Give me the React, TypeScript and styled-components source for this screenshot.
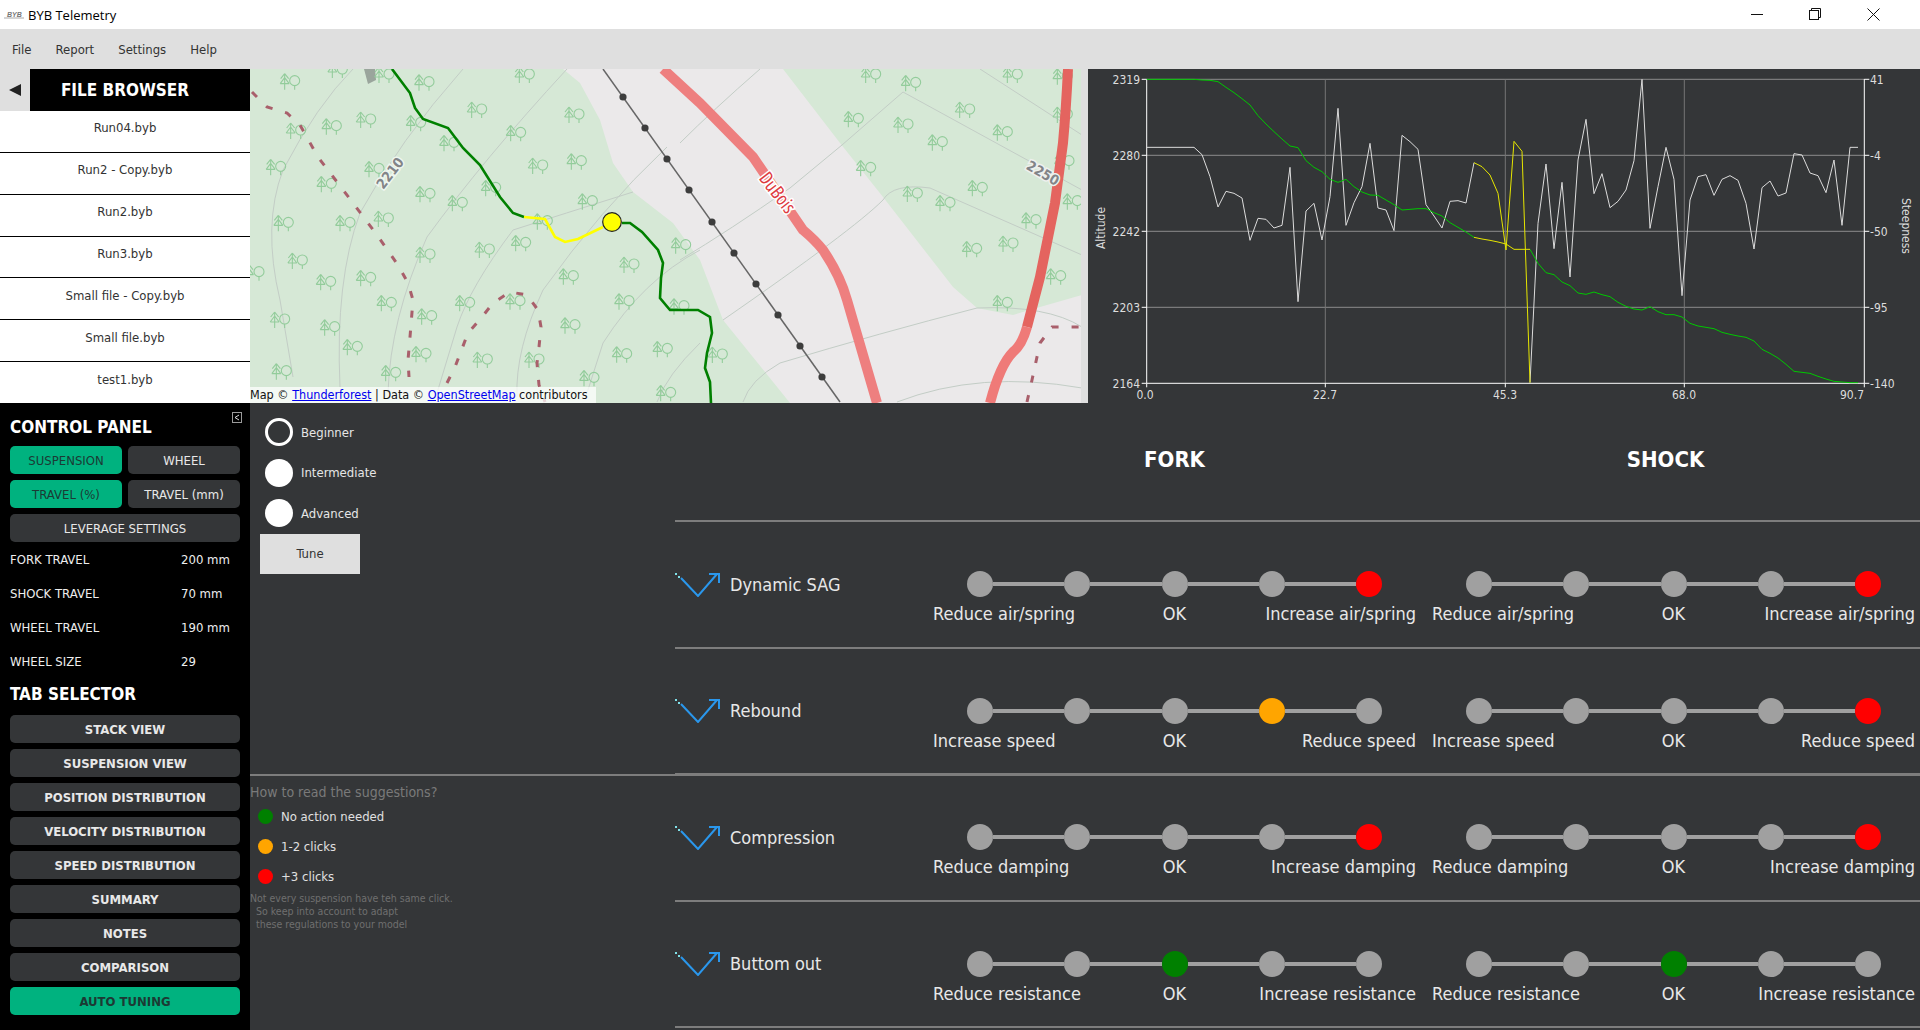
import React from "react";
import styled, { createGlobalStyle } from "styled-components";

const BG = "#343638";
const UI = `"DejaVu Sans", "Liberation Sans", sans-serif`;

const Global = createGlobalStyle`
  html, body { margin: 0; padding: 0; width: 1920px; height: 1030px; overflow: hidden; background: ${BG}; }
  * { box-sizing: border-box; }
`;

const Page = styled.div`
  width: 1920px; height: 1030px; display: flex; flex-direction: column;
  font-family: ${UI}; font-stretch: condensed;
`;
const TitleBar = styled.div`
  height: 29px; background: #fff; display: flex; align-items: center; padding-left: 4px;
`;
const Title = styled.span`
  font-family: "Open Sans", "Noto Sans", sans-serif; font-stretch: normal; font-size: 13px; color: #000; margin-left: 4px;
`;
const WindowButtons = styled.div`
  margin-left: auto; display: flex; width: 177px; padding-left: 8px; gap: 46px;
`;
const MenuBar = styled.div`
  height: 40px; background: #dfdfdf; display: flex; align-items: center; padding-left: 12px; gap: 24px;
  font-size: 13px; color: #333;
`;
const TopArea = styled.div`
  height: 334px; display: flex;
`;
const FileBrowser = styled.div`
  width: 250px; background: #fff; display: flex; flex-direction: column;
`;
const FileHeader = styled.div`
  height: 42px; display: flex; background: #dfdfdf; flex: none;
`;
const Collapse = styled.div`
  width: 30px; display: flex; align-items: center; justify-content: center;
`;
const Triangle = styled.div`
  width: 0; height: 0; border-style: solid; border-width: 6.5px 12px 6.5px 0; border-color: transparent #222 transparent transparent;
`;
const FileTitle = styled.div`
  flex: 1; background: #000; color: #fff; font-weight: 700; font-size: 17px; display: flex; align-items: center; justify-content: center; padding-right: 30px;
`;
const FileRow = styled.div<{ $last?: boolean }>`
  flex: 1; display: flex; align-items: center; justify-content: center; font-size: 13px; color: #333; padding-bottom: 7px;
  border-bottom: ${p => (p.$last ? "none" : "1px solid #000")};
`;
const MapPane = styled.div`
  width: 838px; background: #dfdfdf; position: relative; overflow: hidden;
`;
const MapSvg = styled.svg`
  display: block; width: 831px; height: 334px;
`;
const Attribution = styled.div`
  position: absolute; left: 0; bottom: 0; height: 16px; width: 346px; background: rgba(255,255,255,.72);
  font-size: 12.5px; color: #111; line-height: 16px; white-space: nowrap;
`;
const MapLink = styled.a`
  color: #0000ee; text-decoration: underline;
`;
const ChartPane = styled.div`
  width: 832px; background: ${BG};
`;
const ChartSvg = styled.svg`
  display: block; width: 832px; height: 334px;
  text { font-family: ${UI}; font-stretch: condensed; font-size: 12px; fill: #ddd; }
`;
const Lower = styled.div`
  flex: 1; display: flex; min-height: 0;
`;
const Sidebar = styled.div`
  width: 250px; background: #000; padding: 13px 10px 0; display: flex; flex-direction: column; position: relative;
`;
const SideHeading = styled.div`
  font-size: 17px; font-weight: 700; color: #fff; line-height: 22px;
`;
const ToggleIcon = styled.svg`
  position: absolute; right: 8px; top: 9px; width: 10px; height: 11px;
`;
const ButtonGrid = styled.div`
  display: grid; grid-template-columns: 112px 112px; gap: 6px; margin-top: 8px;
`;
const PanelButton = styled.div<{ $on?: boolean; $wide?: boolean; $bold?: boolean }>`
  height: 28px; border-radius: 5px; display: flex; align-items: center; justify-content: center;
  background: ${p => (p.$on ? "#00b27f" : BG)}; color: ${p => (p.$on ? "#1c3a34" : "#e8e8e8")};
  font-size: 13px; font-weight: ${p => (p.$bold ? 700 : 400)};
  ${p => (p.$wide ? "grid-column: 1 / 3;" : "")}
`;
const InfoList = styled.div`
  display: flex; flex-direction: column; margin-top: 0;
`;
const InfoRow = styled.div`
  height: 34px; display: flex; align-items: center; color: #eee; font-size: 13px;
`;
const InfoLabel = styled.span`
  width: 171px;
`;
const TabHeading = styled(SideHeading)`
  margin-top: 5px;
`;
const TabList = styled.div`
  display: flex; flex-direction: column; gap: 6px; margin-top: 10px;
`;
const Main = styled.div`
  flex: 1; display: flex; background: ${BG};
`;
const LeftCol = styled.div`
  width: 425px; display: flex; flex-direction: column; position: relative; z-index: 1;
`;
const TopPane = styled.div`
  height: 373px; margin-right: -1245px; border-bottom: 2px solid #7d7d7d; padding: 15px 0 0 15px;
`;
const RadioRow = styled.div`
  display: flex; align-items: center; height: 28px; margin-bottom: 12.5px; gap: 8px; color: #e6e6e6; font-size: 13px;
`;
const Radio = styled.div<{ $on?: boolean }>`
  width: 28px; height: 28px; border-radius: 50%;
  background: ${p => (p.$on ? BG : "#fff")}; border: ${p => (p.$on ? "3px solid #fff" : "none")};
`;
const TuneButton = styled.div`
  width: 100px; height: 40px; margin: -6px 0 0 -5px; background: #dfdfdf; color: #333; font-size: 13px;
  display: flex; align-items: center; justify-content: center;
`;
const Legend = styled.div`
  padding-top: 7px; display: flex; flex-direction: column;
`;
const LegendTitle = styled.div`
  font-size: 14px; line-height: 18px; color: #7a7a7a;
`;
const LegendRow = styled.div`
  height: 30px; display: flex; align-items: center; gap: 8px; padding-left: 8px; color: #e0e0e0; font-size: 13px;
`;
const LegendDot = styled.div<{ $c: string }>`
  width: 15px; height: 15px; border-radius: 50%; background: ${p => p.$c};
`;
const LegendNote = styled.div`
  font-size: 10.5px; line-height: 13px; color: #6f6f6f; white-space: pre; margin-top: 1px;
`;
const RightCol = styled.div`
  flex: 1; display: flex; flex-direction: column;
`;
const HeaderRow = styled.div`
  height: 119px; border-bottom: 2px solid #7d7d7d; display: grid; grid-template-columns: 258px 483px 483px; column-gap: 16px; column-gap: 0;
  align-items: start; padding-top: 44px;
`;
const SideTitle = styled.div<{ $col: number }>`
  grid-column: ${p => p.$col}; font-size: 22px; font-weight: 700; color: #fff; text-align: center; line-height: 26px;
  ${p => (p.$col === 3 ? "margin-left: 16px;" : "")}
`;
const SuggestionRow = styled.div`
  height: 126.6px; border-bottom: 2px solid #7d7d7d; display: flex;
`;
const RowLabel = styled.div`
  width: 258px; height: 26px; margin-top: 49px; display: flex; align-items: center; gap: 9px; font-size: 18px; color: #e8e8e8;
`;
const Group = styled.div`
  width: 483px; margin-right: 16px; padding-top: 49px; display: flex; flex-direction: column; align-items: center;
`;
const Slider = styled.div`
  width: 415px; display: flex; align-items: center;
`;
const SliderDot = styled.div<{ $c?: string }>`
  width: 26px; height: 26px; border-radius: 50%; flex: none; background: ${p => p.$c || "#a0a0a0"};
`;
const Connector = styled.div`
  flex: 1; height: 4px; background: #a0a0a0;
`;
const Labels = styled.div`
  width: 100%; margin-top: 5px; display: grid; grid-template-columns: 1fr auto 1fr; font-size: 18px; line-height: 24px; color: #e8e8e8;
`;
const LabelEnd = styled.span`
  text-align: right;
`;

const z4 = (x: number, y: number) => [250 + x / 3, 60 + y / 3];
const z5 = (x: number, y: number) => [680 + x / 3, 60 + y / 3];
const trees = [
  ...[[122,65],[350,180],[247,200],[500,190],[600,250],[683,150],[800,220],[975,165],[866,318],[982,305],[1015,425],[80,322],[140,213],[232,373],[375,328],[528,403],[625,430],[725,385],[403,477],[288,490],[103,490],[880,485],[815,550],[706,570],[528,585],[145,603],[15,638],[230,667],[350,655],[958,650],[1140,615],[1295,557],[1125,725],[1290,740],[412,730],[533,770],[647,730],[798,725],[92,780],[242,803],[963,797],[310,862],[1118,884],[1240,868],[516,883],[700,900],[855,900],[97,935],[425,940],[1020,955],[1250,1000],[826,45],[525,68],[405,45],[265,30]].map(p => z4(p[0], p[1])),
  ...[[575,45],[695,70],[1000,45],[1150,50],[523,178],[672,195],[857,150],[970,218],[775,248],[1150,165],[1155,305],[560,325],[700,402],[798,430],[895,385],[1056,482],[878,568],[987,552],[1180,425],[1130,650],[970,730],[115,885]].map(p => z5(p[0], p[1])),
];
const contours = [
  "M353 69Q317 105 283 170Q262 225 280 300L293 377",
  "M463 69Q400 140 360 213Q335 280 340 387",
  "M567 69Q483 160 427 237Q390 320 388 393",
  "M633 192Q560 215 513 230Q470 287 457 327L437 393",
  "M667 147Q600 210 543 290Q515 350 517 397",
  "M700 250Q643 280 603 343L587 393",
  "M700 343Q667 375 657 402",
  "M760 69Q713 110 680 143",
  "M903 92L842 145L790 188Q730 230 680 260",
  "M903 92L1082 190",
  "M980 69L1082 135",
  "M1082 255L930 188Q893 183 883 200Q853 230 723 320",
  "M1082 327Q1047 305 977 308Q880 333 780 363Q750 380 743 402",
  "M1082 388Q980 370 897 402",
];
const dots = [[623,97],[645,128],[667,159],[689,190],[712,222],[734,253],[756,284],[778,315],[800,346],[822,377]];

function MapDrawing() {
  return (
    <MapSvg viewBox="250 69 831 334">
      <rect x="250" y="69" width="831" height="334" fill="#d6e8d6" />
      <path d="M563 69L783 69L840 143L883 197L953 287L977 308L1013 315L1040 307L1082 295V403H790L723 320L700 260L673 223L633 192L613 163L600 120L580 83Z" fill="#ebe9ea" />
      <path d="M364 69H375L376 80L368 84Z" fill="#9aa59c" />
      {contours.map((d, i) => <path key={i} d={d} fill="none" stroke="#c3cdc6" strokeWidth="1" />)}
      {trees.map(([x, y], i) => (
        <g key={i} transform={`translate(${x} ${y})`} fill="none" stroke="#93cc9b" strokeWidth="1.1">
          <path d="M-6 8V-8M-6-8L-10-3M-6-8L-2-3M-6-4L-10.5 2M-6-4L-1.5 2M-10.5 2H-1.5" />
          <circle cx="4" cy="-1" r="5" />
          <path d="M4 4V8" />
        </g>
      ))}
      <g fill="none" stroke="#a95f6b" strokeWidth="3" strokeDasharray="7 13">
        <path d="M252 92L267 107L287 113L300 125L318 157L353 203L377 235L398 265L408 283L413 300L410 337L408 360L409 377" />
        <path d="M447 383L455 367L468 333L482 317L493 303L510 292L527 295L538 310L541 327L539 347L537 363L539 385L545 402" />
        <path d="M1027 402L1032 380L1040 343L1052 327H1082" />
      </g>
      <path d="M603 69L840 402" stroke="#666" strokeWidth="1.5" fill="none" />
      {dots.map(([x, y], i) => <circle key={i} cx={x} cy={y} r="3.6" fill="#3d3d3d" />)}
      <path d="M663 69L700 103L753 157L803 230Q815 240 823 250Q840 275 847 300L877 403" stroke="#ee7f7f" strokeWidth="10" fill="none" />
      <path d="M1068 69Q1066 110 1063 143L1055 203L1040 277L1027 327" stroke="#e4645f" strokeWidth="10" fill="none" />
      <path d="M1027 327Q1022 345 1013 352Q1000 365 990 403" stroke="#ef7a78" strokeWidth="10" fill="none" />
      <text x="777" y="199" transform="rotate(52 777 193)" textAnchor="middle" fontFamily="Open Sans, sans-serif" fontSize="19" fill="#dd3a3f" stroke="#fff" strokeWidth="3" paintOrder="stroke">DuBois</text>
      <text x="390" y="178" transform="rotate(-52 390 173)" textAnchor="middle" fontFamily="DejaVu Sans, sans-serif" fontWeight="700" fontSize="14" fill="#828488" stroke="#eef5ee" strokeWidth="3" paintOrder="stroke">2210</text>
      <text x="1043" y="178" transform="rotate(30 1043 173)" textAnchor="middle" fontFamily="DejaVu Sans, sans-serif" fontWeight="700" fontSize="14" fill="#828488" stroke="#eef0ee" strokeWidth="3" paintOrder="stroke">2250</text>
      <path d="M392 69L410 93L415 108L423 119L448 128L463 148L480 165L500 197L513 213L524 217" stroke="#008000" strokeWidth="2.6" fill="none" />
      <path d="M524 217L545 219L555 237L565 242L578 239L603 227" stroke="#ffff00" strokeWidth="2.6" fill="none" />
      <path d="M622 223H630L642 232L658 250L663 263L661 278L660 298L670 310H698L710 317L712 333L707 353L705 368L710 382L711 403" stroke="#008000" strokeWidth="2.6" fill="none" />
      <circle cx="612" cy="222" r="9.3" fill="#ffff00" stroke="#222" strokeWidth="1.2" />
    </MapSvg>
  );
}

const whiteA = [[170,262],[312,262],[336,284],[360,350],[384,441],[408,394],[432,400],[456,414],[480,541],[504,475],[528,478],[552,504],[576,496],[600,322],[624,725],[648,453],[672,430],[696,540],[720,410],[744,145],[768,496],[792,428],[816,380],[840,250],[864,444],[888,450],[912,512],[936,226],[960,245],[984,268],[1008,434],[1032,468],[1056,504],[1080,424],[1104,422],[1128,429],[1152,308]];
const yellowA1 = [[1152,308],[1176,320],[1200,345],[1224,400],[1248,570]];
const yellowA2 = [[18,570],[42,244],[66,274],[90,968]];
const whiteB = [[90,968],[114,490],[138,312],[162,566],[186,367],[210,651],[234,300],[258,178],[282,401],[306,341],[330,443],[354,424],[378,390],[402,302],[426,58],[450,505],[474,380],[498,262],[522,358],[546,707],[570,420],[594,350],[618,344],[642,406],[666,358],[690,347],[714,361],[738,430],[762,567],[786,383],[810,363],[834,408],[858,399],[882,281],[906,285],[930,339],[954,347],[978,398],[1002,300],[1026,496],[1050,262],[1074,262]];
const greenA = [[170,58],[312,58],[336,60],[360,61],[384,65],[408,82],[432,98],[456,116],[480,135],[504,167],[528,192],[552,215],[576,237],[600,258],[624,263],[648,302],[672,322],[696,335],[720,358],[744,367],[768,358],[792,380],[816,396],[840,405],[864,406],[888,420],[912,434],[936,450],[960,448],[984,446],[1008,446],[1032,458],[1056,468],[1080,488],[1104,502],[1128,516],[1152,532]];
const gYellow1 = [[1152,532],[1176,537],[1200,541],[1224,546],[1248,552]];
const gYellow2 = [[18,552],[42,568],[66,568],[90,568]];
const greenB = [[90,568],[114,610],[138,638],[162,644],[186,666],[210,677],[234,699],[258,703],[282,696],[306,704],[330,710],[354,727],[378,739],[402,747],[426,750],[450,740],[474,755],[498,764],[522,764],[546,771],[570,790],[594,798],[618,802],[642,806],[666,817],[690,823],[714,828],[738,832],[762,843],[786,868],[810,880],[834,894],[858,913],[882,934],[906,937],[930,940],[954,949],[978,957],[1002,964],[1026,966],[1050,968],[1074,968]];
const p6 = (a: number[][]) => a.map(([x, y]) => `${1090 + x / 3},${60 + y / 3}`).join(" ");
const p7 = (a: number[][]) => a.map(([x, y]) => `${1500 + x / 3},${60 + y / 3}`).join(" ");

function Chart() {
  const ys = [79.3, 155.3, 231.3, 307.3];
  const xs = [1325.3, 1505.3, 1684.3];
  const L = 1146.7, R = 1864.3, B = 383.3;
  return (
    <ChartSvg viewBox="1088 69 832 334">
      {ys.map(y => <line key={y} x1={L} x2={R} y1={y} y2={y} stroke="#8c8c8c" />)}
      {xs.map(x => <line key={x} x1={x} x2={x} y1={79.3} y2={B} stroke="#767676" />)}
      <path d={`M${L} 79V${B}H${R}V79`} fill="none" stroke="#fff" strokeWidth="1" />
      {[...ys, B].map(y => <path key={y} d={`M${L - 5} ${y}H${L}M${R} ${y}H${R + 5}`} stroke="#fff" />)}
      {[L, ...xs, R].map(x => <path key={x} d={`M${x} ${B}V${B + 4}`} stroke="#fff" />)}
      <polyline points={p6(whiteA)} fill="none" stroke="#dcdcdc" />
      <polyline points={p7(whiteB)} fill="none" stroke="#dcdcdc" />
      <polyline points={p6(greenA)} fill="none" stroke="#00c800" />
      <polyline points={p7(greenB)} fill="none" stroke="#00c800" />
      <polyline points={p6(gYellow1)} fill="none" stroke="#e6e600" />
      <polyline points={p7(gYellow2)} fill="none" stroke="#e6e600" />
      <polyline points={p6(yellowA1)} fill="none" stroke="#e6e600" />
      <polyline points={p7(yellowA2)} fill="none" stroke="#e6e600" />
      {["2319", "2280", "2242", "2203", "2164"].map((t, i) => <text key={t} x="1140" y={[84, 160, 236, 312, 388][i]} textAnchor="end">{t}</text>)}
      {["41", "-4", "-50", "-95", "-140"].map((t, i) => <text key={t} x="1870" y={[84, 160, 236, 312, 388][i]}>{t}</text>)}
      {[["0.0", 1145], ["22.7", 1325], ["45.3", 1505], ["68.0", 1684], ["90.7", 1852]].map(([t, x]) => <text key={t as string} x={x as number} y="399" textAnchor="middle">{t}</text>)}
      <text x="1109" y="232" transform="rotate(-90 1105 232)" textAnchor="middle">Altitude</text>
      <text x="1898" y="230" transform="rotate(90 1902 230)" textAnchor="middle">Steepness</text>
    </ChartSvg>
  );
}

function TuneIcon() {
  return (
    <svg width="46" height="25" viewBox="0 0 46 25" fill="none">
      <path d="M6 6L23 24L42 2" stroke="#2a97ec" strokeWidth="2" />
      <path d="M34 2H44V11" stroke="#2a97ec" strokeWidth="2" />
      <rect x="0" y="1" width="2" height="2" fill="#7fe0e8" />
      <rect x="3" y="4" width="2" height="2" fill="#7fe0e8" />
    </svg>
  );
}

const C: Record<string, string> = { r: "#ff0000", o: "#ffa500", g: "#008000" };

function Scale({ active, pos, left, right }: { active: string; pos: number; left: string; right: string }) {
  return (
    <Group>
      <Slider>
        {[0, 1, 2, 3, 4].map(i => (
          <React.Fragment key={i}>
            {i > 0 && <Connector />}
            <SliderDot $c={i === pos ? C[active] : undefined} />
          </React.Fragment>
        ))}
      </Slider>
      <Labels>
        <span>{left}</span>
        <span>OK</span>
        <LabelEnd>{right}</LabelEnd>
      </Labels>
    </Group>
  );
}

const rows = [
  { name: "Dynamic SAG", l: "Reduce air/spring", r: "Increase air/spring", f: ["r", 4], s: ["r", 4] },
  { name: "Rebound", l: "Increase speed", r: "Reduce speed", f: ["o", 3], s: ["r", 4] },
  { name: "Compression", l: "Reduce damping", r: "Increase damping", f: ["r", 4], s: ["r", 4] },
  { name: "Buttom out", l: "Reduce resistance", r: "Increase resistance", f: ["g", 2], s: ["g", 2] },
];
const files = ["Run04.byb", "Run2 - Copy.byb", "Run2.byb", "Run3.byb", "Small file - Copy.byb", "Small file.byb", "test1.byb"];
const tabs = ["STACK VIEW", "SUSPENSION VIEW", "POSITION DISTRIBUTION", "VELOCITY DISTRIBUTION", "SPEED DISTRIBUTION", "SUMMARY", "NOTES", "COMPARISON"];

export default function App() {
  return (
    <Page>
      <Global />
      <TitleBar>
        <svg width="20" height="12" viewBox="0 0 20 12">
          <text x="3" y="8" fontFamily="Liberation Sans, sans-serif" fontWeight="700" fontStyle="italic" fontSize="7" fill="#777">BYB</text>
          <path d="M0 9H20" stroke="#aaa" strokeWidth="1" />
        </svg>
        <Title>BYB Telemetry</Title>
        <WindowButtons>
          <svg width="12" height="12" viewBox="0 0 12 12"><path d="M0 6.5H12" stroke="#111" /></svg>
          <svg width="12" height="12" viewBox="0 0 12 12" fill="none" stroke="#111"><rect x=".5" y="2.5" width="9" height="9" /><path d="M2.5 2.5V.5H11.5V9.5H9.5" /></svg>
          <svg width="13" height="13" viewBox="0 0 13 13" stroke="#111" fill="none"><path d="M.5 .5L12.5 12.5M12.5 .5L.5 12.5" /></svg>
        </WindowButtons>
      </TitleBar>
      <MenuBar>
        <span>File</span><span>Report</span><span>Settings</span><span>Help</span>
      </MenuBar>
      <TopArea>
        <FileBrowser>
          <FileHeader>
            <Collapse><Triangle /></Collapse>
            <FileTitle>FILE BROWSER</FileTitle>
          </FileHeader>
          {files.map((f, i) => <FileRow key={f} $last={i === files.length - 1}>{f}</FileRow>)}
        </FileBrowser>
        <MapPane>
          <MapDrawing />
          <Attribution>Map © <MapLink>Thunderforest</MapLink> | Data © <MapLink>OpenStreetMap</MapLink> contributors</Attribution>
        </MapPane>
        <ChartPane><Chart /></ChartPane>
      </TopArea>
      <Lower>
        <Sidebar>
          <ToggleIcon viewBox="0 0 10 11" fill="none" stroke="#9a9a9a"><rect x=".5" y=".5" width="9" height="10" /><path d="M7 3L3 5.5L7 8" stroke="#ddd" /></ToggleIcon>
          <SideHeading>CONTROL PANEL</SideHeading>
          <ButtonGrid>
            <PanelButton $on>SUSPENSION</PanelButton>
            <PanelButton>WHEEL</PanelButton>
            <PanelButton $on>TRAVEL (%)</PanelButton>
            <PanelButton>TRAVEL (mm)</PanelButton>
            <PanelButton $wide>LEVERAGE SETTINGS</PanelButton>
          </ButtonGrid>
          <InfoList>
            <InfoRow><InfoLabel>FORK TRAVEL</InfoLabel>200 mm</InfoRow>
            <InfoRow><InfoLabel>SHOCK TRAVEL</InfoLabel>70 mm</InfoRow>
            <InfoRow><InfoLabel>WHEEL TRAVEL</InfoLabel>190 mm</InfoRow>
            <InfoRow><InfoLabel>WHEEL SIZE</InfoLabel>29</InfoRow>
          </InfoList>
          <TabHeading>TAB SELECTOR</TabHeading>
          <TabList>
            {tabs.map(t => <PanelButton key={t} $bold>{t}</PanelButton>)}
            <PanelButton $bold $on>AUTO TUNING</PanelButton>
          </TabList>
        </Sidebar>
        <Main>
          <LeftCol>
            <TopPane>
              <RadioRow><Radio $on />Beginner</RadioRow>
              <RadioRow><Radio />Intermediate</RadioRow>
              <RadioRow><Radio />Advanced</RadioRow>
              <TuneButton>Tune</TuneButton>
            </TopPane>
            <Legend>
              <LegendTitle>How to read the suggestions?</LegendTitle>
              <LegendRow><LegendDot $c="#008000" />No action needed</LegendRow>
              <LegendRow><LegendDot $c="#ffa500" />1-2 clicks</LegendRow>
              <LegendRow><LegendDot $c="#ff0000" />+3 clicks</LegendRow>
              <LegendNote>{"Not every suspension have teh same click.\n  So keep into account to adapt\n  these regulations to your model"}</LegendNote>
            </Legend>
          </LeftCol>
          <RightCol>
            <HeaderRow>
              <SideTitle $col={2}>FORK</SideTitle>
              <SideTitle $col={3}>SHOCK</SideTitle>
            </HeaderRow>
            {rows.map(r => (
              <SuggestionRow key={r.name}>
                <RowLabel><TuneIcon />{r.name}</RowLabel>
                <Scale active={r.f[0] as string} pos={r.f[1] as number} left={r.l} right={r.r} />
                <Scale active={r.s[0] as string} pos={r.s[1] as number} left={r.l} right={r.r} />
              </SuggestionRow>
            ))}
          </RightCol>
        </Main>
      </Lower>
    </Page>
  );
}
